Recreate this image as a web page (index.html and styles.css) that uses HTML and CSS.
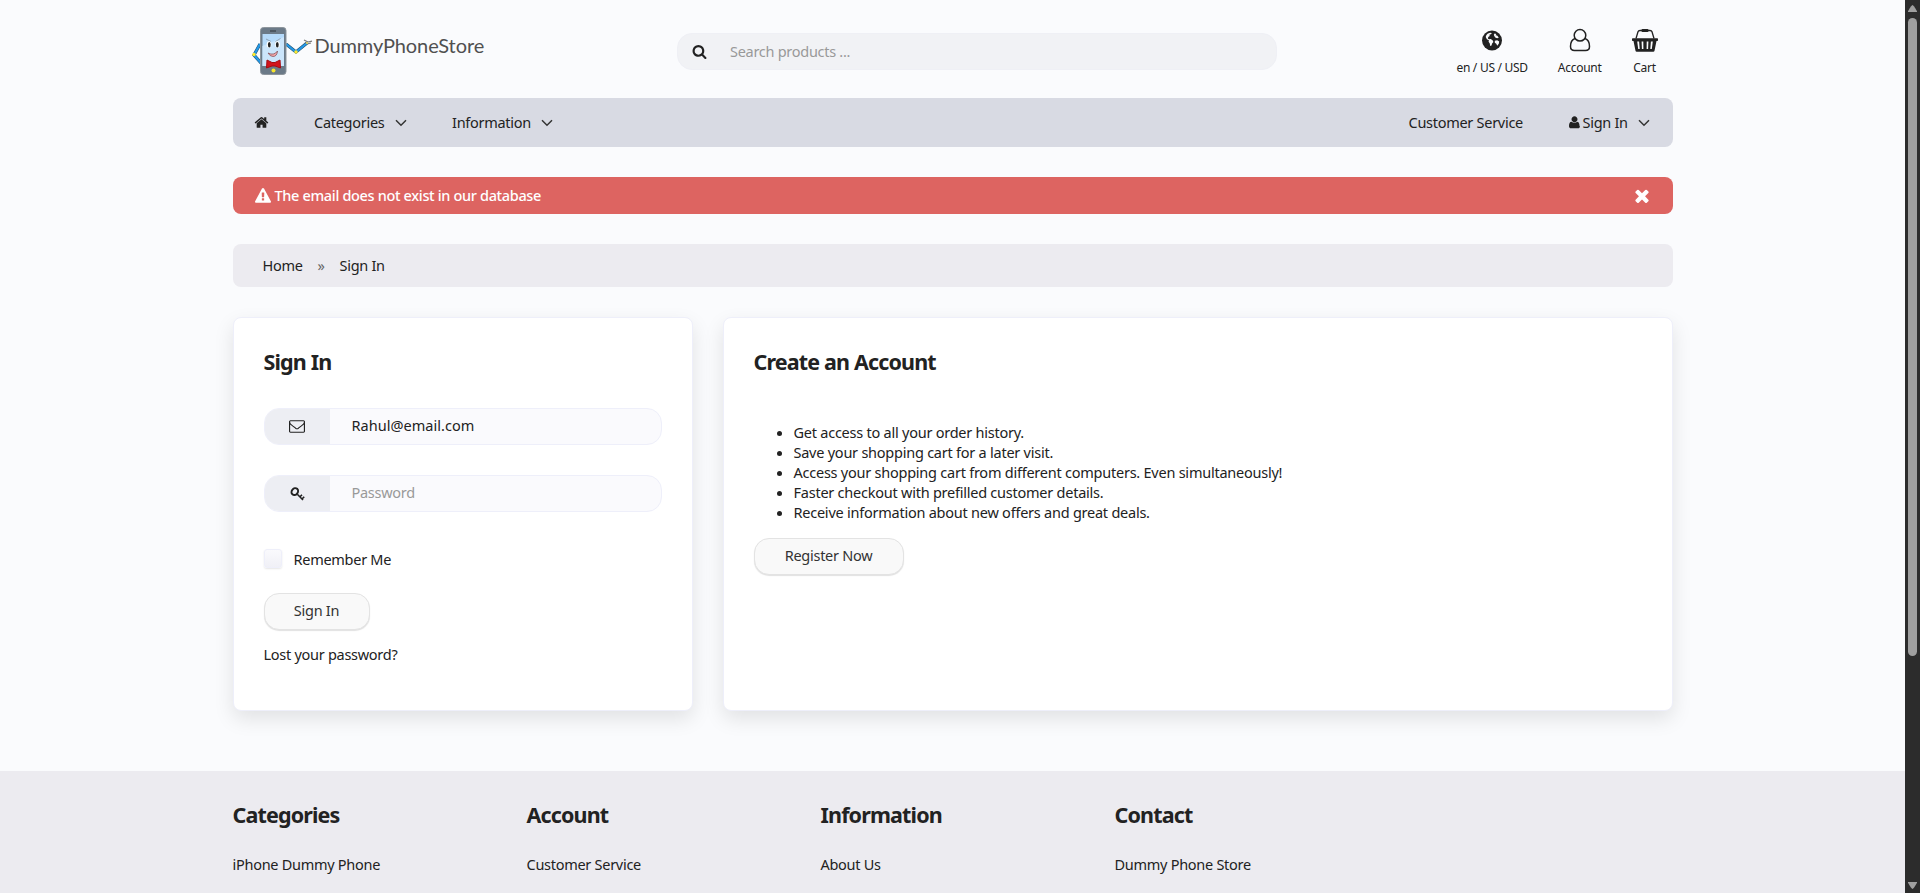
FILE: index.html
```html
<!DOCTYPE html>
<html lang="en">
<head>
<meta charset="utf-8">
<title>Sign In - DummyPhoneStore</title>
<link rel="stylesheet" href="styles.css">
</head>
<body>
<div class="page">
  <div class="container">
    <header class="header">
      <a class="logo">
        <svg class="mascot" viewBox="0 0 62 50" width="62" height="50">
          <g class="line" stroke="#23506e" stroke-width="3.2"><path d="M9 18 3 29l7 8M35 18l10 8 11-9"/></g>
          <g class="line" stroke="#2398e6" stroke-width="2.2"><path d="M9 18 3 29l7 8M35 18l10 8 11-9"/></g>
          <path class="line" d="m54 17 3-1 4-.8M57 16l-4-2M56 18l4-1" stroke="#777" stroke-width="1.2"/>
          <circle cx="3" cy="28.500" r="1.700" fill="#ffe92d"/><circle cx="45" cy="26" r="1.700" fill="#ffe92d"/><circle cx="56" cy="17" r="1" fill="#e8d95a"/>
          <rect x="9.500" y="1.500" width="25.500" height="47" rx="3" fill="#6b7a88" stroke="#8d959c"/>
          <rect x="11.500" y="8" width="21.500" height="32" fill="#b5dafa"/>
          <path d="m11.500 20 21.500-9v29H11.500z" fill="#cbe5fb"/>
          <path d="M19 5h6" stroke="#3b444c" stroke-width="1.300"/>
          <path class="line" d="m15 13 5 2.500M29.500 12.500l-5 3" stroke="#8494a5" stroke-width=".8"/>
          <ellipse cx="18" cy="18.500" rx="2.300" ry="3.300" fill="#fff"/><ellipse cx="26.500" cy="18.500" rx="2.300" ry="3.300" fill="#fff"/>
          <ellipse cx="18.300" cy="18.700" rx="1.400" ry="2.700" fill="#222"/><ellipse cx="26.300" cy="18.700" rx="1.400" ry="2.700" fill="#222"/>
          <path d="M17 27q6 3 9.500-2-.5 5.500-4.500 5.500-3 0-5-3.500z" fill="#f3a5a8" stroke="#7a4a55" stroke-width=".7"/>
          <path d="m16 34 5 2.500h3l5-2.500.5 8-5.500-2h-3l-5.500 2z" fill="#d3141b" stroke="#a50d13" stroke-width="1"/>
          <circle cx="22.500" cy="44.500" r="2" fill="#f7e52b"/>
        </svg>
        <span class="brand">DummyPhoneStore</span>
      </a>
      <div class="search">
        <svg class="ic-search" viewBox="0 0 1792 1792" width="15" height="15"><path d="M1216 832q0-185-131.5-316.500t-316.500-131.500-316.500 131.500-131.500 316.500 131.500 316.500 316.500 131.500 316.500-131.500 131.500-316.500zm512 832q0 52-38 90t-90 38q-54 0-90-38l-343-342q-179 124-399 124-143 0-273.500-55.500t-225-150-150-225-55.500-273.500 55.500-273.500 150-225 225-150 273.500-55.500 273.500 55.500 225 150 150 225 55.500 273.500q0 220-124 399l343 343q37 37 37 90z"/></svg>
        <span class="placeholder">Search products ...</span>
      </div>
      <nav class="tools">
        <a class="tool tool-region">
          <svg viewBox="0 -2.500 20 24" width="20" height="24"><circle cx="10" cy="10" r="10"/><path d="M5.500 3.200 8 2.200l1.800.3-.8 1.300-1.500.3.200 1.300-1.500 1.200-.2 1.700 1.200.4 1.600-.2 2 1.500.6 1.400-1.300 1.500-.6 2-1.300.6-.4-2.600-1.200-1.700.3-1.400-2-1-1.200-2.300.6-1.800z" class="land"/><path d="m12.600 3 1.700.6-.7 1.200 1.500.3 1.700 1.900-1.500.8-1.700-.6-1.200-1.400-.6-1.500zM12.800 10.300l2.400-.5 2 1.100-.4 2.300-1.600 2-.9-1.900-1.500-1z" class="land"/></svg>
          <span>en / US / USD</span></a>
        <a class="tool tool-account">
          <svg class="line" viewBox="0 0 22 24" width="22" height="24" stroke="#222" stroke-width="1.500"><circle cx="11" cy="7.300" r="5.800"/><path d="M6 10.500C3 11.500 1.500 15 1.500 18.500c0 2.700 1.500 4 4 4h11c2.500 0 4-1.300 4-4 0-3.500-1.500-7-4.500-8"/></svg>
          <span>Account</span></a>
        <a class="tool tool-cart">
          <svg viewBox="0 0 26 24" width="26" height="24"><path d="M4 10.500 6 3.800q.4-1.300 2-1.300h10q1.600 0 2 1.300l2 6.700" class="line" stroke="#222" stroke-width="1.300"/><rect x="9.500" y="1" width="7" height="3" rx="1"/><path fill-rule="evenodd" d="M.7 10.200h24.600q.7 0 .7.700v1.400q0 .7-.7.700h-.8l-2 9.700q-.2 1-1.200 1H4.700q-1 0-1.200-1L1.500 13H.7q-.7 0-.7-.7v-1.400q0-.7.700-.7zM5.200 13.500l1 7.500h1.500l-.6-7.500zm4.400 0 .3 7.500h1.500l-.1-7.500zm5.100 0-.1 7.500h1.500l.3-7.500zm4.200 0-.6 7.500h1.500l1-7.500z"/></svg>
          <span>Cart</span></a>
      </nav>
    </header>

    <nav class="navbar">
      <svg class="ic-home" viewBox="0 0 1792 1792" width="15" height="15"><path d="M1472 992v480q0 26-19 45t-45 19h-384v-384h-256v384h-384q-26 0-45-19t-19-45v-480q0-1 .5-3t.5-3l575-474 575 474q1 2 1 6zm223-69l-62 74q-8 9-21 11h-3q-13 0-21-7l-692-577-692 577q-12 8-24 7-13-2-21-11l-62-74q-8-10-7-23.500t11-21.500l719-599q32-26 76-26t76 26l244 204v-195q0-14 9-23t23-9h192q14 0 23 9t9 23v408l219 182q10 8 11 21.500t-7 23.500z"/></svg>
      <span class="nav-categories">Categories</span><svg class="chev" viewBox="0 0 12 8" width="12" height="8"><path d="m1 1.300 5 4.900 5-4.900"/></svg>
      <span class="nav-information">Information</span><svg class="chev" viewBox="0 0 12 8" width="12" height="8"><path d="m1 1.300 5 4.900 5-4.900"/></svg>
      <span class="nav-service">Customer Service</span>
      <svg class="ic-user" viewBox="192 128 1408 1600" width="11" height="13"><path d="M1600 1405q0 120-73 189.500t-194 69.500h-874q-121 0-194-69.500t-73-189.500q0-85 8.500-160.500t31.500-152 58.500-131 94-89 134.500-34.500q131 128 377 128t313-128q76 0 134.500 34.500t94 89 58.500 131 31.500 152 8.500 160.500zm-320-893q0 159-112.500 271.500t-271.500 112.500-271.500-112.500-112.500-271.500 112.500-271.500 271.500-112.500 271.500 112.500 112.500 271.500z"/></svg>
      <span class="nav-signin">Sign In</span><svg class="chev" viewBox="0 0 12 8" width="12" height="8"><path d="m1 1.300 5 4.900 5-4.900"/></svg>
    </nav>

    <div class="alert">
      <svg viewBox="0 0 1792 1792" width="16" height="16"><path d="M1024 1375v-190q0-14-9.500-23.500t-22.500-9.500h-192q-13 0-22.500 9.500t-9.500 23.500v190q0 14 9.500 23.500t22.500 9.500h192q13 0 22.500-9.500t9.500-23.500zm-2-374l18-459q0-12-10-19-13-11-24-11h-220q-11 0-24 11-10 7-10 21l17 457q0 10 10 16.500t24 6.500h185q14 0 23.500-6.500t10.500-16.500zm-14-934l768 1408q35 63-2 126-17 29-46.500 46t-63.500 17h-1536q-34 0-63.500-17t-46.500-46q-37-63-2-126l768-1408q17-31 47-49t65-18 65 18 47 49z"/></svg>
      <span class="alert-text">The email does not exist in our database</span>
      <svg class="close" viewBox="302 302 1188 1252" width="14" height="14"><path d="M1490 1322q0 40-28 68l-136 136q-28 28-68 28t-68-28l-294-294-294 294q-28 28-68 28t-68-28l-136-136q-28-28-28-68t28-68l294-294-294-294q-28-28-28-68t28-68l136-136q28-28 68-28t68 28l294 294 294-294q28-28 68-28t68 28l136 136q28 28 28 68t-28 68l-294 294 294 294q28 28 28 68z"/></svg>
    </div>

    <div class="breadcrumb"><span class="crumb-home">Home</span><span class="sep">»</span><span class="crumb-current">Sign In</span></div>

    <main class="cards">
      <section class="card card-signin">
        <h2 class="h-signin">Sign In</h2>
        <div class="field"><span class="addon"><svg viewBox="0 128 1792 1664" width="16" height="15"><path d="M1664 1504v-768q-32 36-69 66-268 206-426 338-51 43-83 67t-86.500 48.500-102.500 24.500h-2q-48 0-102.500-24.500t-86.500-48.500-83-67q-158-132-426-338-37-30-69-66v768q0 13 9.500 22.500t22.500 9.500h1472q13 0 22.500-9.500t9.500-22.500zm0-1051v-24.500l-.5-13-3-12.500-5.500-9-9-7.500-14-2.500h-1472q-13 0-22.500 9.500t-9.500 22.500q0 168 147 284 193 152 401 317 6 5 35 29.500t46 37.500 44.500 31.500 50.500 27.500 43 9h2q20 0 43-9t50.500-27.500 44.500-31.500 46-37.500 35-29.500q208-165 401-317 54-43 100.500-115.500t46.500-131.500zm128-37v1088q0 66-47 113t-113 47h-1472q-66 0-113-47t-47-113v-1088q0-66 47-113t113-47h1472q66 0 113 47t47 113z"/></svg></span><span class="value email">Rahul@email.com</span></div>
        <div class="field"><span class="addon"><svg class="line" viewBox="0 0 15 14" width="15" height="14" stroke="#222"><ellipse cx="4.800" cy="4.600" rx="3" ry="3.600" transform="rotate(40 4.800 4.600)" stroke-width="2"/><path d="m7.300 7.300 5.700 5.700M10 9.800l2-2M12 12l2.200-2.200" stroke-width="1.600"/></svg></span><span class="value password">Password</span></div>
        <label class="remember"><span class="checkbox"></span><span class="remember-text">Remember Me</span></label>
        <button class="btn btn-signin"><span>Sign In</span></button>
        <a class="lost">Lost your password?</a>
      </section>
      <section class="card card-create">
        <h2 class="h-create">Create an Account</h2>
        <ul class="benefits">
          <li>Get access to all your order history.</li>
          <li>Save your shopping cart for a later visit.</li>
          <li>Access your shopping cart from different computers. Even simultaneously!</li>
          <li>Faster checkout with prefilled customer details.</li>
          <li>Receive information about new offers and great deals.</li>
        </ul>
        <button class="btn btn-register"><span>Register Now</span></button>
      </section>
    </main>
  </div>

  <footer class="footer">
    <div class="container footer-grid">
      <div><h3>Categories</h3><a>iPhone Dummy Phone</a></div>
      <div><h3>Account</h3><a>Customer Service</a></div>
      <div><h3>Information</h3><a>About Us</a></div>
      <div><h3>Contact</h3><a>Dummy Phone Store</a></div>
    </div>
  </footer>
</div>
<div class="scrollbar">
  <svg viewBox="0 0 9 7" width="9" height="7"><path d="M4.500 0Q5.500 0 9 6.200V7H0v-.8Q3.500 0 4.500 0z"/></svg>
  <div class="thumb"></div>
  <svg class="down" viewBox="0 0 9 7" width="9" height="7"><path d="M4.500 7Q3.500 7 0 .8V0h9v.8Q5.500 7 4.500 7z"/></svg>
</div>
</body>
</html>
```
FILE: styles.css
```css
* { box-sizing: border-box; }
html, body { margin: 0; height: 893px; overflow: hidden; }
body {
  display: flex;
  font: 14.5px/20px "Noto Sans", sans-serif;
  letter-spacing: -0.28px;
  color: #222;
  background: #fafbfd;
}
svg { display: block; flex: none; fill: #222; }
.line { fill: none; }
span, a, h2, h3, li { white-space: nowrap; }
.page { width: 1905px; height: 893px; overflow: hidden; }
.container { width: 1440px; margin: 0 auto; }

.header { display: flex; height: 98px; }
.logo { display: flex; width: 444.5px; padding: 26px 0 0 18px; }
.brand { margin: 7px 0 0 2px; font: 20px/24px Lato, sans-serif; color: #505050; letter-spacing: -0.1px; }
.search {
  display: flex; align-items: center;
  width: 600px; height: 37px; margin-top: 33px; padding-left: 14px;
  background: #f1f2f5; border: 1px solid #eff0f5; border-radius: 15px;
}
.placeholder { margin-left: 23px; padding-bottom: 2px; color: #999; }
.tools { display: flex; margin-left: auto; padding-right: 15px; gap: 30px; }
.tool { display: flex; flex-direction: column; align-items: center; padding-top: 28px; font-size: 12px; }
.tool svg { height: 24px; }
.tool span { line-height: 16px; margin-top: 8px; }
.land { fill: #fafbfd; }

.navbar {
  display: flex; align-items: center;
  height: 49px; padding: 0 23px 0 21px;
  background: #d8dae3; border-radius: 8px;
}
.navbar span, .alert span, .breadcrumb span { padding-bottom: 2px; }
.chev { fill: none; stroke: #333; stroke-width: 1.5; margin-left: 11px; }
.nav-categories { width: 70px; margin-left: 45.5px; }
.nav-information { width: 78px; margin-left: 45px; }
.nav-service { width: 115px; margin-left: auto; }
.ic-user { margin: 0 3px 0 45px; }
.nav-signin { width: 44px; }

.alert {
  display: flex; align-items: center;
  height: 37px; margin-top: 30px; padding: 0 24px 0 22.5px;
  background: #dd6461; border-radius: 8px; color: #fff; font-weight: 500; letter-spacing: -0.34px;
}
.alert svg { fill: #fff; }
.alert-text { margin-left: 3.5px; }
.close { margin-left: auto; }

.breadcrumb {
  display: flex; align-items: center;
  height: 43px; margin-top: 30px; padding-left: 30px;
  background: #ecebf0; border-radius: 8px;
}
.crumb-home { width: 40px; }
.sep { width: 37px; text-align: center; color: #666; font-size: 14.5px; }

.cards { display: flex; gap: 30px; margin-top: 30px; }
.card {
  height: 394px; padding: 30px;
  background: #fff; border: 1px solid #eeeffa; border-radius: 8px;
  box-shadow: 0 8px 20px rgba(0, 0, 0, .1);
}
.card-signin { width: 460px; }
.card-create { width: 950px; }
h2, h3 { margin: 0; font-size: 21.5px; line-height: 28px; font-weight: 700; letter-spacing: -0.85px; }

.field {
  display: flex; overflow: hidden;
  height: 37px; margin-top: 30px;
  background: #fafafd; border: 1px solid #eeeffa; border-radius: 15px;
}
h2 + .field { margin-top: 32px; }
.addon { display: flex; align-items: center; justify-content: center; width: 65px; background: #edeef3; }
.value { margin-left: 22px; line-height: 32px; }
.email { letter-spacing: 0.03px; }
.password { color: #999; }
.remember { display: flex; margin-top: 37px; height: 22px; }
.checkbox {
  width: 18px; height: 19px; border: 1px solid #eeeffa; border-radius: 3px;
  background: linear-gradient(#fafafd, #f0f0f6); box-shadow: 0 1px 2px rgba(0, 0, 0, .1);
}
.remember-text { margin: 0 0 0 12px; }
.btn {
  display: block; height: 37px; padding: 0 0 4px;
  font: inherit; letter-spacing: inherit; color: #333;
  background: #f9f9f9; border: 1px solid #e3e3e3; border-radius: 15px;
  box-shadow: 0 1px 1px rgba(0, 0, 0, .12);
}
.btn-signin { width: 106px; margin-top: 22px; }
.lost { display: block; margin-top: 14px; }
.benefits { margin: 46px 0 16px; padding-left: 40px; letter-spacing: -0.24px; }
.btn-register { width: 150px; }

.footer { height: 122px; margin-top: 60px; padding-top: 30px; background: #ecebf0; }
.footer-grid { display: grid; grid-template-columns: repeat(4, 264px); column-gap: 30px; }
.footer-grid a { display: block; margin-top: 25px; }

.scrollbar {
  display: flex; flex-direction: column; align-items: center;
  width: 15px; height: 893px; padding: 5px 1px 4px 0; background: #2c2c2c;
}
.scrollbar svg { fill: #9f9f9f; }
.thumb { width: 9px; height: 638px; margin-top: 6px; border-radius: 5px; background: #9f9f9f; }
.down { margin-top: auto; }
```
